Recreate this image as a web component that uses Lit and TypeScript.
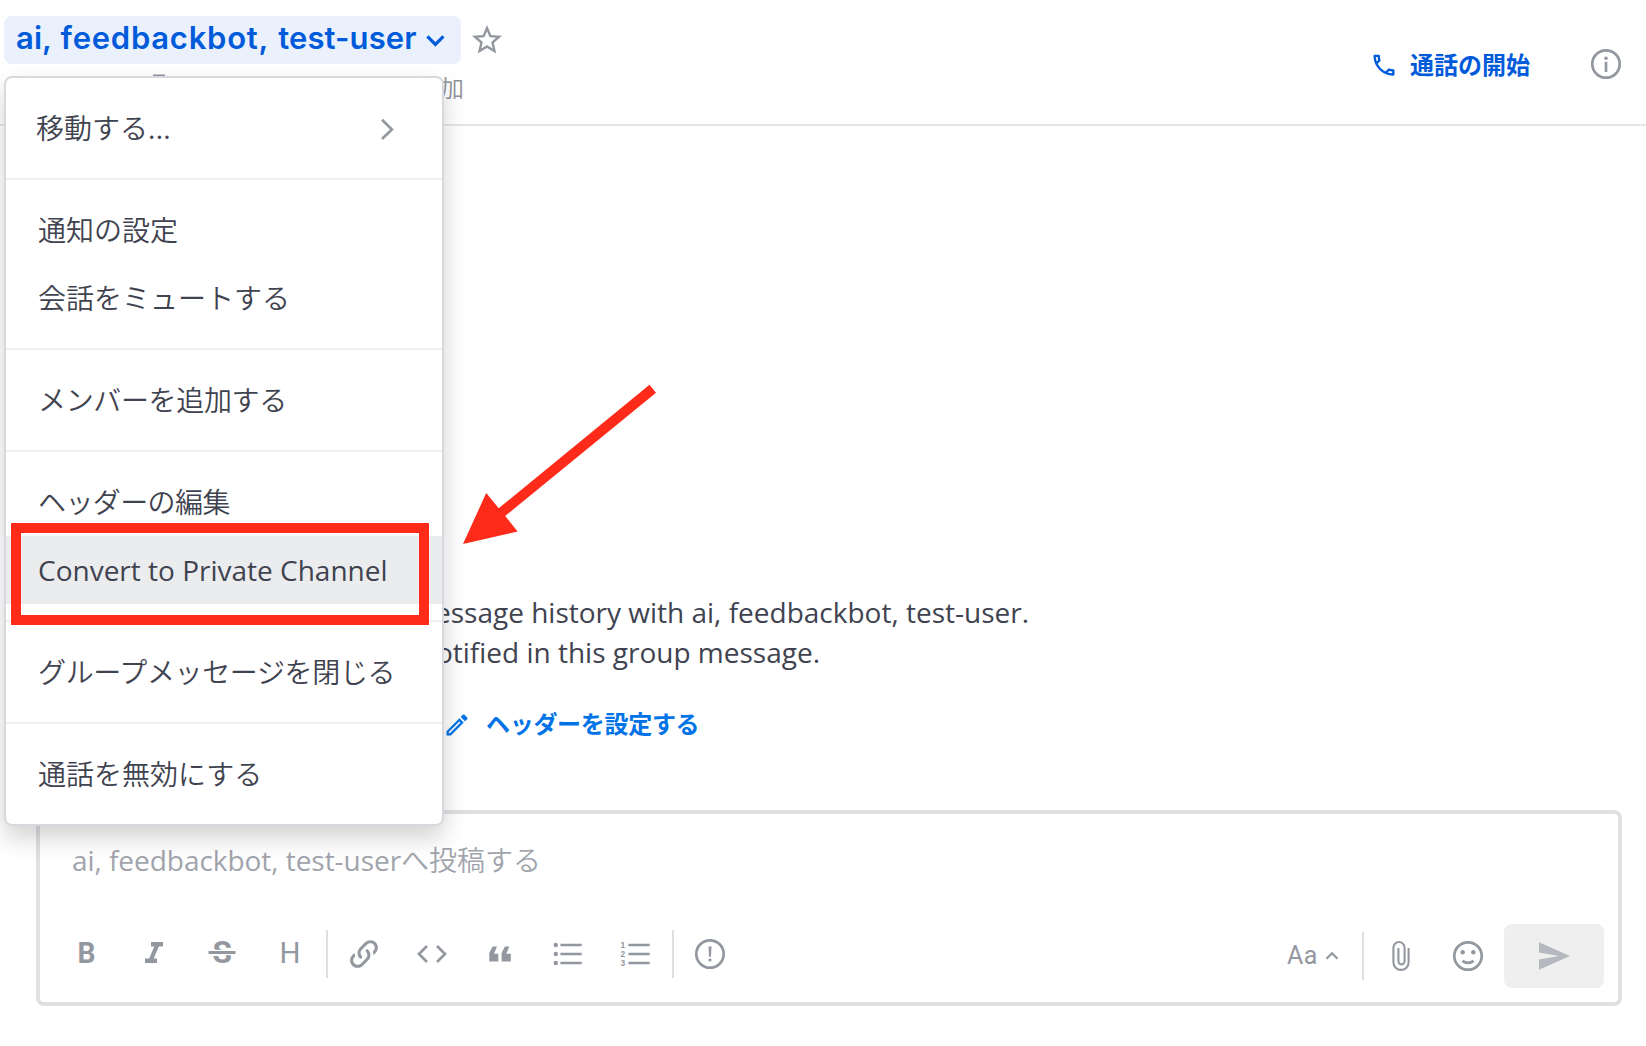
import { LitElement, html, css, svg, TemplateResult } from "lit";
import { customElement, property } from "lit/decorators.js";

const MDI = {
  star: "M12,15.39L8.24,17.66L9.23,13.38L5.91,10.5L10.29,10.13L12,6.09L13.71,10.13L18.09,10.5L14.77,13.38L15.76,17.66M22,9.24L14.81,8.63L12,2L9.19,8.63L2,9.24L7.45,13.97L5.82,21L12,17.27L18.18,21L16.54,13.97L22,9.24Z",
  phone: "M20,15.5C18.8,15.5 17.5,15.3 16.4,14.9H16.1C15.8,14.9 15.6,15 15.4,15.2L13.2,17.4C10.4,15.9 8,13.6 6.6,10.8L8.8,8.6C9.1,8.3 9.2,7.9 9,7.6C8.7,6.5 8.5,5.2 8.5,4C8.5,3.5 8,3 7.5,3H4C3.5,3 3,3.5 3,4C3,13.4 10.6,21 20,21C20.5,21 21,20.5 21,20V16.5C21,16 20.5,15.5 20,15.5M5,5H6.5C6.6,5.9 6.8,6.8 7,7.6L5.8,8.8C5.4,7.6 5.1,6.3 5,5M19,19C17.7,18.9 16.4,18.6 15.2,18.2L16.4,17C17.2,17.2 18.1,17.4 19,17.4V19Z",
  pencil: "M14.06,9L15,9.94L5.92,19H5V18.08L14.06,9M17.66,3C17.41,3 17.15,3.1 16.96,3.29L15.13,5.12L18.88,8.87L20.71,7.04C21.1,6.65 21.1,6 20.71,5.63L18.37,3.29C18.17,3.09 17.92,3 17.66,3M14.06,6.19L3,17.25V21H6.75L17.81,9.94L14.06,6.19Z",
  link: "M10.59,13.41C11,13.8 11,14.44 10.59,14.83C10.2,15.22 9.56,15.22 9.17,14.83C7.22,12.88 7.22,9.71 9.17,7.76V7.76L12.71,4.22C14.66,2.27 17.83,2.27 19.78,4.22C21.73,6.17 21.73,9.34 19.78,11.29L18.29,12.78C18.3,11.96 18.17,11.14 17.89,10.36L18.36,9.88C19.54,8.71 19.54,6.81 18.36,5.64C17.19,4.46 15.29,4.46 14.12,5.64L10.59,9.17C9.41,10.34 9.41,12.24 10.59,13.41M13.41,9.17C13.8,8.78 14.44,8.78 14.83,9.17C16.78,11.12 16.78,14.29 14.83,16.24V16.24L11.29,19.78C9.34,21.73 6.17,21.73 4.22,19.78C2.27,17.83 2.27,14.66 4.22,12.71L5.71,11.22C5.7,12.04 5.83,12.86 6.11,13.65L5.64,14.12C4.46,15.29 4.46,17.19 5.64,18.36C6.81,19.54 8.71,19.54 9.88,18.36L13.41,14.83C14.59,13.66 14.59,11.76 13.41,10.59C13,10.2 13,9.56 13.41,9.17Z",
  pin: "M16,12V4H17V2H7V4H8V12L6,14V16H11.2V22H12.8V16H18V14L16,12M8.8,14L10,12.8V4H14V12.8L15.2,14H8.8Z",
};

// Icons drawn on a 36px canvas whose origin is the centre.
const icons: Record<string, TemplateResult> = {
  bold: svg`<text class="ui b" x="-8.4" y="9" textLength="18" lengthAdjust="spacingAndGlyphs">B</text>`,
  italic: svg`<g fill="currentColor" transform="translate(-18 -18) scale(1.5)"><path d="M10 4H18V7H10ZM6 15H14V18H6ZM12.21 7H15.21L11.79 15H8.79Z"/></g>`,
  strike: svg`<text class="ui b big" x="-9.6" y="9.4" textLength="19.4" lengthAdjust="spacingAndGlyphs">S</text>
    <path d="M-14 -1.5H14" stroke="#fff" stroke-width="5.4"/><path d="M-13.5 -1.5H13.5" stroke="currentColor" stroke-width="3"/>`,
  heading: svg`<text class="ui" x="-10.5" y="9" textLength="21" lengthAdjust="spacingAndGlyphs">H</text>`,
  link: svg`<path transform="translate(-18 -18) scale(1.5)" d=${MDI.link} fill="currentColor"/>`,
  code: svg`<path class="s" d="M-5 -8L-13 0L-5 8M5 -8L13 0L5 8"/>`,
  quote: svg`<path fill="currentColor" d="M-10.7 7.4H-1.7V-.3H-6L-3 -7.5H-7.3L-10.7 -1.3ZM1.6 7.4H10.8V-.3H6.3L9.3 -7.5H5L1.6 -1.3Z"/>`,
  ul: svg`<g fill="currentColor"><circle cx="-12.2" cy="-9" r="2.2"/><circle cx="-12.2" cy="0" r="2.2"/><circle cx="-12.2" cy="9" r="2.2"/></g>
    <path class="s" d="M-7.6 -9H13.7M-7.6 0H13.7M-7.6 9H13.7"/>`,
  ol: svg`<text class="num" x="-15.4" y="-6">1</text><text class="num" x="-15.4" y="3">2</text><text class="num" x="-15.4" y="12">3</text>
    <path class="s" d="M-7.6 -9H13.7M-7.6 0H13.7M-7.6 9H13.7"/>`,
  priority: svg`<circle class="s" r="13.7"/><path d="M-1.5 -7.5H1.5L1 2.8H-1Z" fill="currentColor"/><circle cy="6" r="1.6" fill="currentColor"/>`,
  info: svg`<circle class="s" r="13.7"/><path class="s" d="M0 -2.2V8"/><circle cy="-5.7" r="1.8" fill="currentColor"/>`,
  clip: svg`<path class="s clip" d="M7.6 -8V6.3a7.6 7.6 0 0 1 -15.2 0V-8.4a5.6 5.6 0 0 1 11.2 0V5.3a3.1 3.1 0 0 1 -6.2 0V-8"/>`,
  smile: svg`<circle class="s" r="13.7"/><circle cx="-5.3" cy="-3.7" r="2.2" fill="currentColor"/><circle cx="5.3" cy="-3.7" r="2.2" fill="currentColor"/><path class="s" d="M-5.6 4.8Q0 9 5.6 4.8"/>`,
  send: svg`<path fill="currentColor" d="M-15 -13.7L16 0L-15 13.7V3.5L5 0L-15 -3.5Z"/>`,
  star: svg`<path transform="translate(-18 -18) scale(1.5)" d=${MDI.star} fill="currentColor"/>`,
  phone: svg`<path transform="translate(-13 -12.8) scale(1.1667)" d=${MDI.phone} fill="currentColor"/>`,
  pencil: svg`<path transform="translate(-14 -14) scale(1.1667)" d=${MDI.pencil} fill="currentColor"/>`,
  pin: svg`<path transform="translate(-14.4 -16) scale(1.2)" d=${MDI.pin} fill="currentColor"/>`,
  down: svg`<path class="s thick" d="M-7.6 -3.6L0.4 4.4L8.4 -3.6"/>`,
  right: svg`<path class="s" d="M-5 -8.2L4.8 1.4L-5 11"/>`,
  up: svg`<path class="s up" d="M-5.5 2.8L0 -2.8L5.5 2.8"/>`,
};

@customElement("ui-icon")
export class UiIcon extends LitElement {
  @property() name = "";
  static styles = css`
    :host { display: block; width: 36px; height: 36px; flex: none; }
    svg { display: block; width: 36px; height: 36px; overflow: visible; }
    .s { fill: none; stroke: currentColor; stroke-width: 2.7; }
    .thick { stroke-width: 3.2; }
    .clip { stroke-width: 2.1; }
    .up { stroke-width: 2.2; }
    text { fill: currentColor; }
    .ui { font: 400 29.5px Roboto, sans-serif; }
    .b { font-weight: 700; }
    .big { font-size: 31.5px; }
    .num { font: 700 8.4px "Liberation Sans", sans-serif; }
  `;
  render() {
    return html`<svg viewBox="-18 -18 36 36">${icons[this.name]}</svg>`;
  }
}

interface Item { label: string; tail?: string; cls?: string; sub?: boolean }
const groups: Item[][] = [
  [{ label: "移動する", tail: "...", cls: "move", sub: true }],
  [{ label: "通知の設定" }, { label: "会話をミュートする" }],
  [{ label: "メンバーを追加する", cls: "tight" }],
  [{ label: "ヘッダーの編集", cls: "tighter" }, { label: "Convert to Private Channel", cls: "active" }],
  [{ label: "グループメッセージを閉じる", cls: "tight" }],
  [{ label: "通話を無効にする" }],
];

@customElement("channel-menu")
export class ChannelMenu extends LitElement {
  static styles = css`
    :host {
      display: block; box-sizing: border-box; width: 440px; background: #fff;
      border: 2px solid #d8d9de; border-radius: 8px;
      box-shadow: 0 12px 24px rgba(0, 0, 0, 0.175);
    }
    .group { padding: 16px 0; }
    .group + .group { border-top: 2px solid #efeff0; }
    .item {
      display: flex; align-items: center; justify-content: space-between; height: 68px;
      padding: 0 37px 0 32px; font-size: 28px; line-height: 40px; white-space: nowrap;
      font-weight: 350;
    }
    .active { background: #ebecee; font-weight: 400; }
    .move { padding-left: 30px; }
    .tail { font-weight: 400; letter-spacing: 0.3px; }
    .tight { letter-spacing: -0.35px; }
    .tighter { letter-spacing: -0.6px; }
    ui-icon { color: #93979f; }
  `;
  render() {
    return groups.map((g) => html`<div class="group">${g.map((i) => html`
      <div class="item ${i.cls ?? ""}"><span>${i.label}${i.tail ? html`<span class="tail">${i.tail}</span>` : ""}</span>${i.sub ? html`<ui-icon name="right"></ui-icon>` : ""}</div>`)}</div>`);
  }
}

@customElement("app-root")
export class AppRoot extends LitElement {
  static styles = css`
    :host {
      display: flex; flex-direction: column; position: relative; box-sizing: border-box;
      width: 1646px; height: 1046px; overflow: hidden; background: #fff; color: #3f4350;
      font-family: "Open Sans", "Noto Sans CJK JP", sans-serif; font-size: 28px;
    }
    header {
      display: flex; justify-content: space-between; box-sizing: border-box; height: 126px;
      border-bottom: 2px solid #e6e6e8; padding: 16px 22px 0 4px;
    }
    .titleRow { display: flex; align-items: center; gap: 8px; height: 48px; color: #93979f; }
    .title {
      display: flex; align-items: center; box-sizing: border-box; width: 457px; height: 48px;
      padding: 0 8px 0 12px; justify-content: space-between; border-radius: 8px;
      background: #eaf1fc; color: #005bdb; white-space: nowrap;
    }
    .name { font: 600 31px/44px Inter, sans-serif; letter-spacing: 0.1px; word-spacing: 1.2px; margin-top: -4px; }
    .wide { letter-spacing: 0.75px; }
    .desc {
      display: flex; align-items: center; justify-content: space-between; box-sizing: border-box;
      width: 460px; margin-top: 7px; padding-left: 137px; font-size: 24px; line-height: 34px; color: #8f939c;
      height: 34px; font-weight: 350;
    }
    .actions { display: flex; align-items: center; height: 96px; gap: 58px; color: #93979f; }
    .call {
      display: flex; align-items: center; gap: 9px; color: #005bdb;
      font-size: 24px; line-height: 32px; font-weight: 600;
    }
    .call span { padding-top: 2px; }
    main { flex: 1; display: flex; flex-direction: column; justify-content: flex-end; padding-bottom: 68px; }
    .intro { width: 1029px; text-align: right; line-height: 40px; }
    .intro p { margin: 0; }
    .second { padding-right: 209px; }
    .set {
      display: flex; align-items: center; gap: 11px; margin: 30px 0 0 439px; height: 40px;
      font-size: 24px; font-weight: 600; letter-spacing: -0.3px; color: #0073e6;
    }
    .set ui-icon { margin-top: 5px; }
    .composer {
      display: flex; flex-direction: column; box-sizing: border-box; height: 196px;
      margin: 0 24px 40px 36px; border: 4px solid #dfe0e2; border-radius: 8px;
      padding: 26px 14px 14px 28px;
    }
    .ph { padding-left: 4px; line-height: 40px; color: #a1a4ac; letter-spacing: -0.04px; white-space: nowrap; }
    .ph .jp { font-weight: 350; }
    .bar { display: flex; justify-content: space-between; margin-top: 44px; color: #93979f; height: 64px; }
    .tools { display: flex; align-items: center; gap: 32px; height: 60px; }
    .tools .sep { margin: 0 -14px 0 -14px; }
    .sep { width: 2px; height: 48px; background: #dfe0e2; }
    .right { display: flex; align-items: center; }
    .fmt { display: flex; align-items: center; font: 450 25px/32px Roboto, sans-serif; letter-spacing: 0.6px; }
    .fmt ui-icon { margin: 0 12px 0 -4px; }
    .right > .sep { margin-right: 19px; }
    .smile { margin: 0 18px 0 31px; }
    .send {
      display: flex; align-items: center; justify-content: center; width: 100px; height: 64px;
      border-radius: 8px; background: #efefef; color: #b6b8bf;
    }
    channel-menu { position: absolute; left: 4px; top: 76px; }
    .frame {
      position: absolute; left: 11px; top: 523px; box-sizing: border-box; width: 418px; height: 102px;
      border: 10px solid #ff2b1a;
    }
    .arrow { position: absolute; left: 460px; top: 380px; width: 200px; height: 170px; }
  `;
  private tool(name: string) {
    return html`<ui-icon name=${name}></ui-icon>`;
  }
  render() {
    return html`
      <header>
        <div>
          <div class="titleRow">
            <div class="title"><span class="name">ai, <span class="wide">feedbackbot,</span> test-user</span><ui-icon name="down"></ui-icon></div>
            <ui-icon name="star"></ui-icon>
          </div>
          <div class="desc"><ui-icon name="pin"></ui-icon><span>ヘッダーを追加</span></div>
        </div>
        <div class="actions">
          <div class="call"><ui-icon name="phone"></ui-icon><span>通話の開始</span></div>
          <ui-icon name="info"></ui-icon>
        </div>
      </header>
      <main>
        <div class="intro">
          <p>message history with ai, feedbackbot, test-user.</p>
          <p class="second">notified in this group message.</p>
        </div>
        <div class="set"><ui-icon name="pencil"></ui-icon><span>ヘッダーを設定する</span></div>
      </main>
      <section class="composer">
        <div class="ph">ai, feedbackbot, test-user<span class="jp">へ投稿する</span></div>
        <div class="bar">
          <div class="tools">
            ${["bold", "italic", "strike", "heading"].map(this.tool)}
            <div class="sep"></div>
            ${["link", "code", "quote", "ul", "ol"].map(this.tool)}
            <div class="sep"></div>
            ${this.tool("priority")}
          </div>
          <div class="right">
            <div class="fmt"><span>Aa</span><ui-icon name="up"></ui-icon></div>
            <div class="sep"></div>
            <ui-icon name="clip"></ui-icon>
            <ui-icon class="smile" name="smile"></ui-icon>
            <div class="send"><ui-icon name="send"></ui-icon></div>
          </div>
        </div>
      </section>
      <channel-menu></channel-menu>
      <div class="frame"></div>
      <svg class="arrow" viewBox="460 380 200 170">
        <path fill="#ff2b1a" d="M463 544L486.2 493L498.7 508.3L649.5 384.7L656 392.7L505.2 516L517.6 531.6Z" />
      </svg>
    `;
  }
}
